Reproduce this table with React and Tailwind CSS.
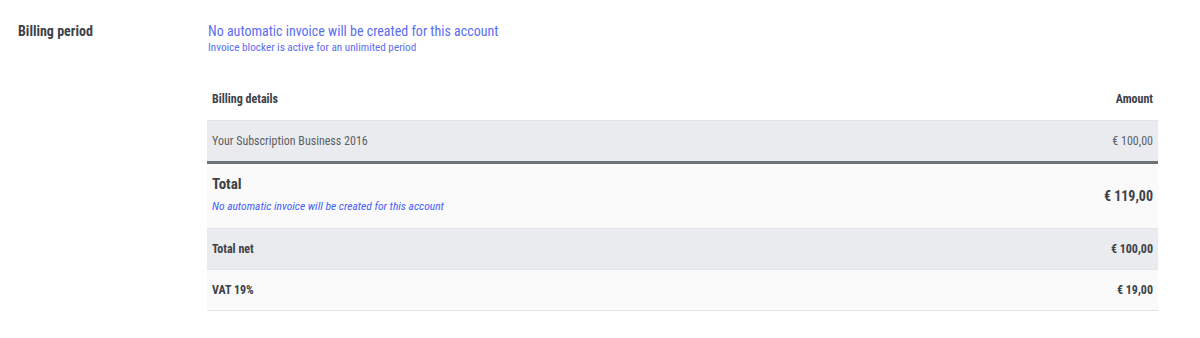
export default function App() {
  const rows = [
    { label: 'Total net', amount: '€ 100,00', bg: 'bg-[#e9ebee]' },
    { label: 'VAT 19%', amount: '€ 19,00', bg: 'bg-[#fafafa]' },
  ]

  return (
    <div className="w-[1200px] h-[338px] bg-white text-[#3d4248] font-['Roboto_Condensed','Liberation_Sans_Narrow',Roboto,sans-serif]">
      <div className="flex pt-[22px]">
        <div className="w-[208px] pl-[18px] text-[14px] font-bold leading-[18px]">Billing period</div>
        <div className="text-[#5b6ef0]">
          <div className="text-[14px] leading-[18px]">No automatic invoice will be created for this account</div>
          <div className="text-[11.2px] leading-[13px] mt-[1px]">Invoice blocker is active for an unlimited period</div>
        </div>
      </div>

      <div className="ml-[207px] w-[951px] mt-[24px]">
        <div className="flex justify-between items-center h-[43px] px-[5px] text-[12px] font-bold border-b border-[#e2e4e7]">
          <span>Billing details</span>
          <span>Amount</span>
        </div>
        <div className="flex justify-between items-center h-[43px] px-[5px] text-[12px] text-[#5c6166] bg-[#e9ebee] border-b-[3px] border-[#6c7378]">
          <span>Your Subscription Business 2016</span>
          <span>€ 100,00</span>
        </div>
        <div className="flex justify-between items-start h-[65px] px-[5px] pt-[11px] bg-[#fafafa] border-b border-[#e2e4e7]">
          <div>
            <div className="text-[15px] font-bold leading-[18px]">Total</div>
            <div className="text-[11.5px] italic text-[#4560f7] mt-[6px] leading-[14px]">No automatic invoice will be created for this account</div>
          </div>
          <span className="self-center -mt-[11px] text-[14px] font-bold">€ 119,00</span>
        </div>
        {rows.map(r => (
          <div key={r.label} className={`flex justify-between items-center h-[41px] px-[5px] text-[12px] font-bold border-b border-[#e2e4e7] ${r.bg}`}>
            <span>{r.label}</span>
            <span>{r.amount}</span>
          </div>
        ))}
      </div>
    </div>
  )
}
